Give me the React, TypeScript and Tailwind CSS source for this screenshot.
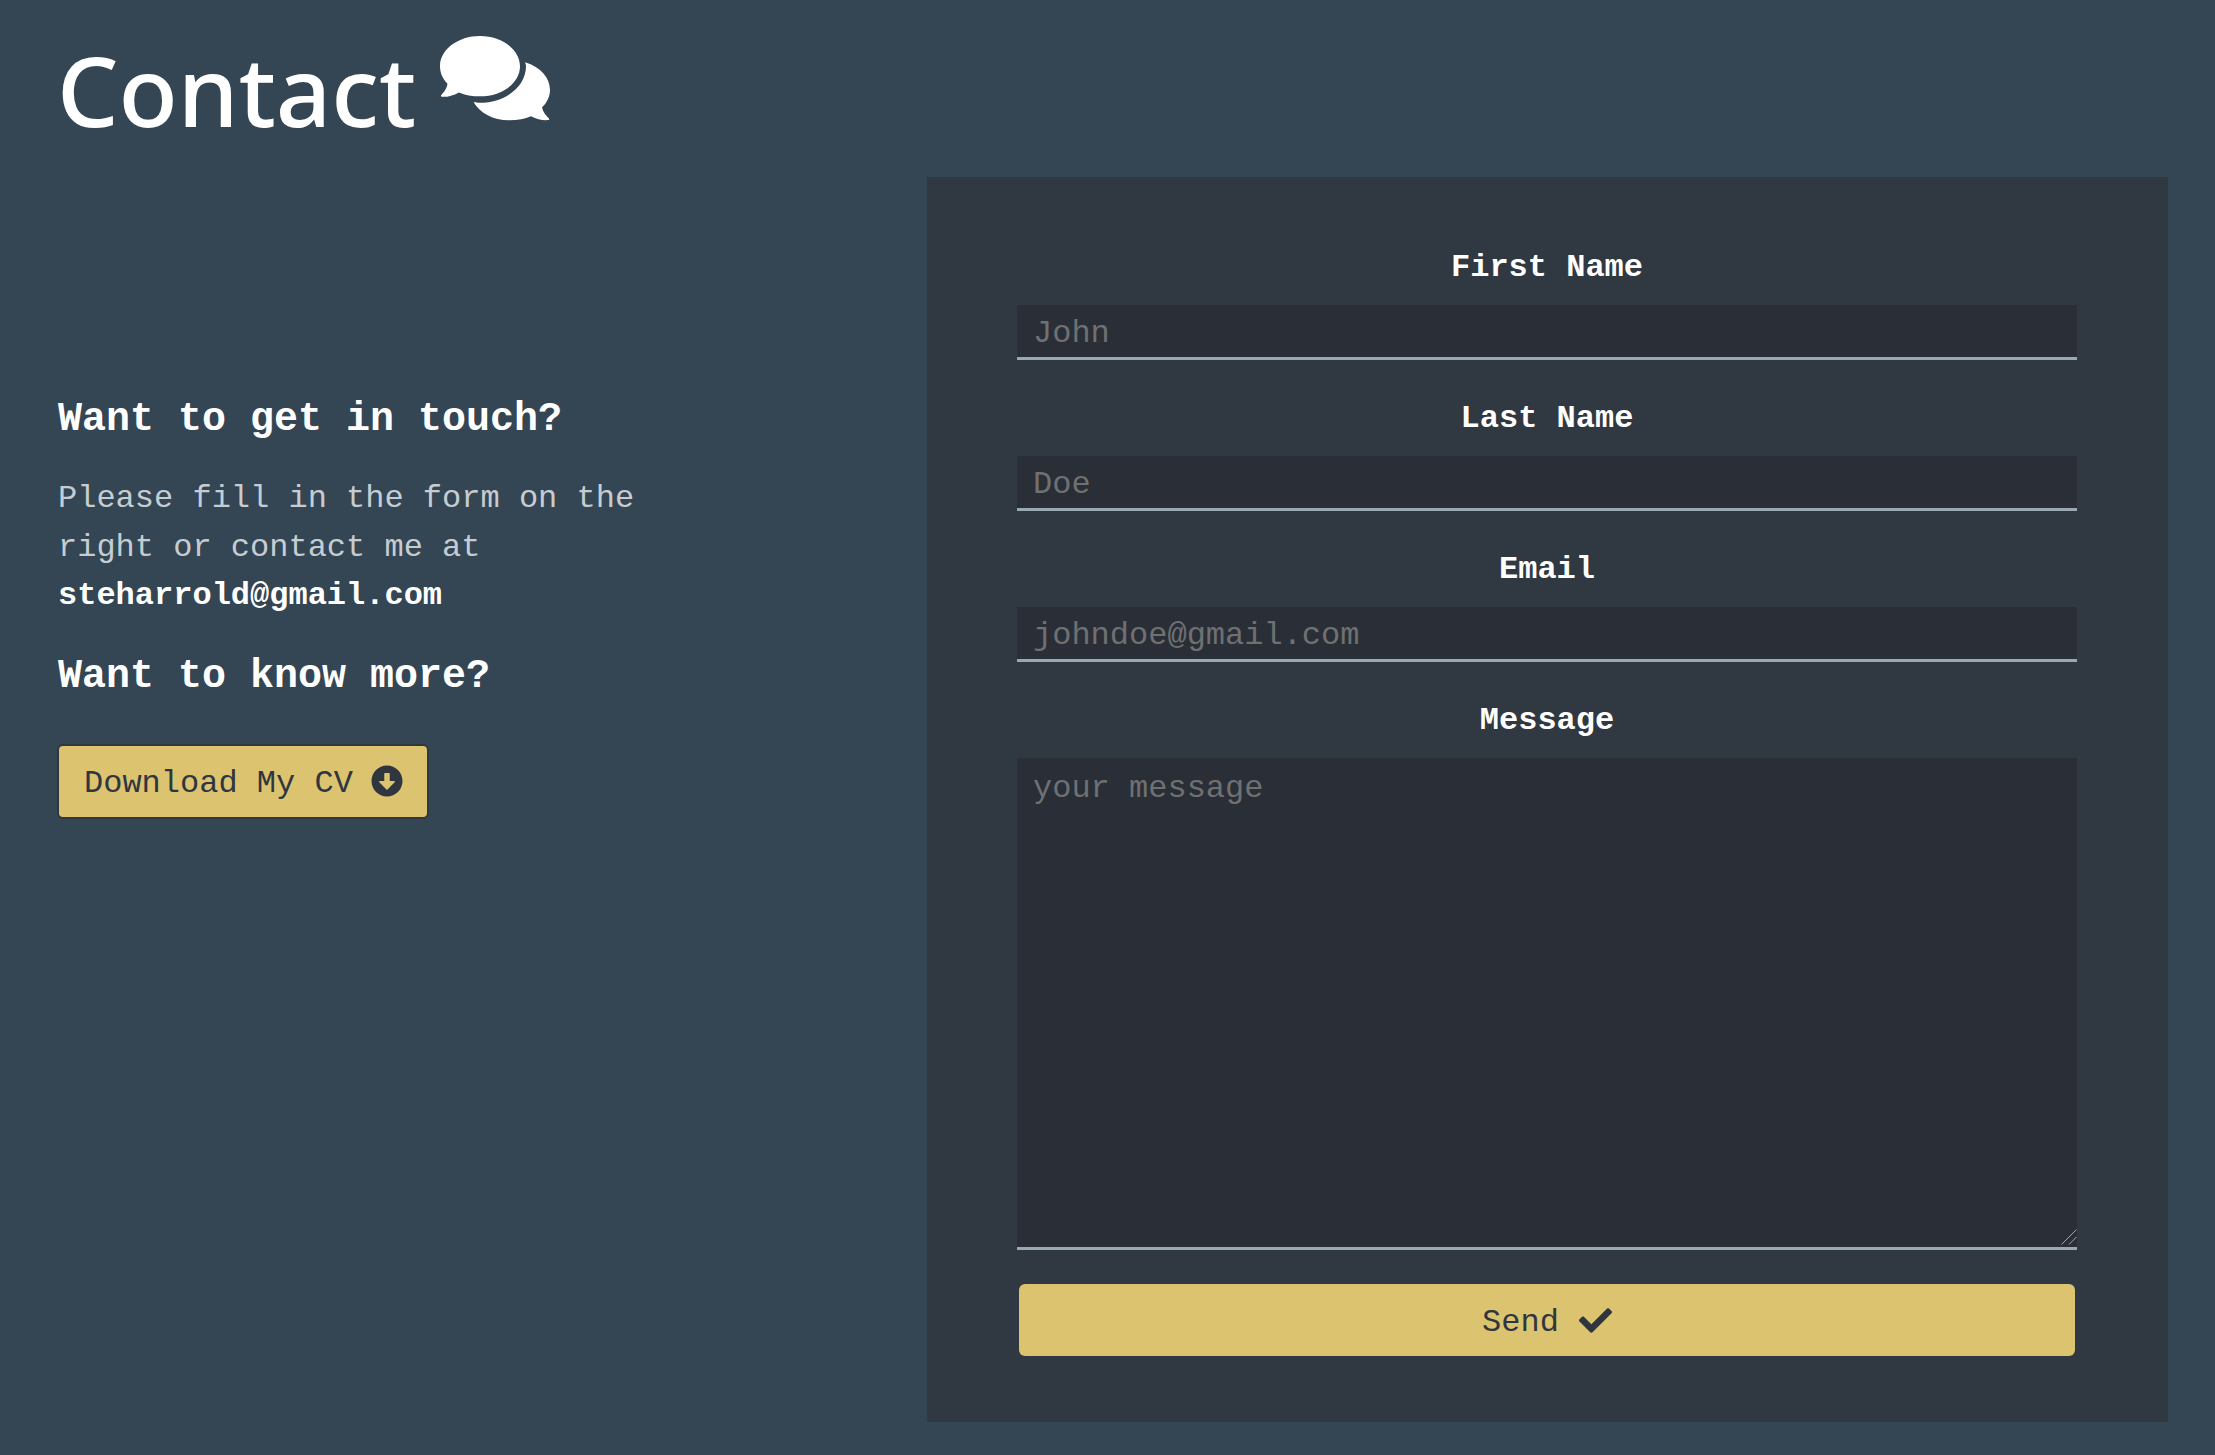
import { FaArrowAltCircleDown, FaCheck } from "react-icons/fa";

const mono = "font-['Liberation_Mono','DejaVu_Sans_Mono',monospace]";

const fields = [
  { label: "First Name", placeholder: "John" },
  { label: "Last Name", placeholder: "Doe" },
  { label: "Email", placeholder: "johndoe@gmail.com" },
];

function ChatIcon() {
  return (
    <svg viewBox="0 0 110 107" preserveAspectRatio="none" className="w-[110px] h-[85px] fill-white ml-[24px] mt-[36px]">
      <path d="M40 0C62 0 80 17 80 38S62 76 40 76C32 76 25 74 19 71C13 75 7 77 2 76.5C0 76 1 75 2 73C5 69 7 65 7.5 60C3 54 0 47 0 38C0 17 18 0 40 0Z" />
      <path d="M85 33C101 39 110 53 110 68C110 76 107 84 102 90C103 96 106 100 109 104C110 106 108 106 106 106C101 106 96 104 91 101C85 104 78 106 69 106C53 106 40 97 33.5 83C36 83.5 38 84 40 84C66 84 86 63 86 38C86 36 85.5 35 85 33Z" />
    </svg>
  );
}

export default function App() {
  return (
    <div className={`min-h-[1455px] bg-[#344553] flex justify-between ${mono}`}>
      <div className="pl-[58px]">
        <div className="flex items-start h-[177px]">
          <h1 className="font-['Noto_Sans','Open_Sans',sans-serif] font-medium text-[97px] leading-[136px] mt-[21px] -ml-px text-white">Contact</h1>
          <ChatIcon />
        </div>
        <div className="pt-[215px] w-[620px]">
          <h2 className="text-[40px] leading-[56px] font-bold text-white">Want to get in touch?</h2>
          <p className="text-[32px] leading-[48.5px] text-[#c6cdd2] mt-[27px]">
            Please fill in the form on the
            <br />
            right or contact me at
            <br />
            <span className="font-bold text-white">steharrold@gmail.com</span>
          </p>
          <h2 className="text-[40px] leading-[56px] font-bold text-white mt-[28px]">Want to know more?</h2>
          <button className="mt-[39px] -ml-px w-[372px] h-[75px] flex items-center justify-between pl-[25px] pr-[24px] bg-[#dcc36f] border-2 border-[#30383f] rounded-md text-[32px] text-[#30363f]">
            <span className="pt-[6px]">Download My CV</span>
            <FaArrowAltCircleDown className="w-[32px] h-[32px]" />
          </button>
        </div>
      </div>

      <form className="w-[1241px] h-[1245px] mt-[177px] mr-[47px] bg-[#303841] pl-[90px] pr-[91px] pt-[66px] flex flex-col">
        {fields.map((f) => (
          <div key={f.label} className="mb-[34px]">
            <label className="block text-center text-[32px] leading-[50px] font-bold text-white mb-[12px]">{f.label}</label>
            <input
              placeholder={f.placeholder}
              className="block w-full h-[55px] px-[16px] pt-[5px] bg-[#2a2e37] border-b-[3px] border-[#9aa8b2] text-[32px] outline-none placeholder:text-[#6f7072]"
            />
          </div>
        ))}
        <label className="block text-center text-[32px] leading-[50px] font-bold text-white mb-[12px]">Message</label>
        <div className="relative">
          <textarea
            placeholder="your message"
            className="block w-full h-[492px] px-[16px] py-[7px] resize-none bg-[#2a2e37] border-b-[3px] border-[#9aa8b2] text-[32px] outline-none placeholder:text-[#6f7072]"
          />
          <svg viewBox="0 0 16 16" className="absolute right-0 bottom-[5px] w-[16px] h-[16px] stroke-[#c8c8c8] fill-none">
            <path d="M0.5 15.5L15.5 0.5M8 15.5L15.5 8" strokeWidth="0.8" />
          </svg>
        </div>
        <button className="mt-[34px] mx-[2px] h-[72px] flex items-center justify-center gap-[20px] bg-[#dcc36f] rounded-md text-[32px] text-[#30363f]">
          <span className="pt-[5px]">Send</span>
          <FaCheck className="w-[33px] h-[33px]" />
        </button>
      </form>
    </div>
  );
}
